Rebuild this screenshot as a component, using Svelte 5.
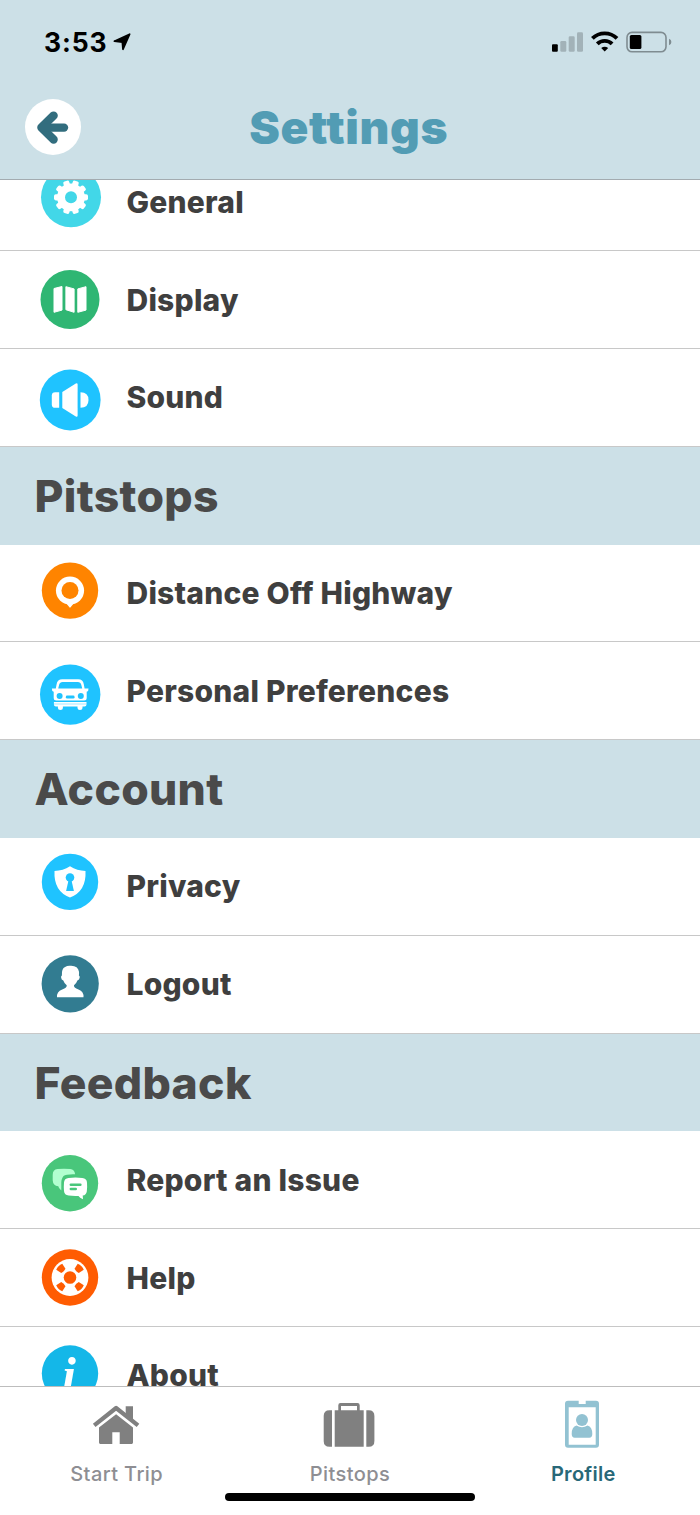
<script>
    let activeTab = 'Profile';

    // x, y: centre of the badge inside the 80x98 icon cell
    const sections = [
        {
            title: '',
            items: [
                { label: 'General', icon: 'gear', color: '#42d7e8', x: 41, y: 44.3, r: 30 },
                { label: 'Display', icon: 'map', color: '#2fb673', x: 40, y: 48.5, r: 29.5 },
                { label: 'Sound', icon: 'speaker', color: '#1fc3ff', x: 40.2, y: 51, r: 30.4 }
            ]
        },
        {
            title: 'Pitstops',
            items: [
                { label: 'Distance Off Highway', icon: 'pin', color: '#ff8400', x: 40, y: 46.6, r: 28.2 },
                { label: 'Personal Preferences', icon: 'car', color: '#1fc3ff', x: 40.2, y: 52.6, r: 30.2 }
            ]
        },
        {
            title: 'Account',
            items: [
                { label: 'Privacy', icon: 'shield', color: '#1fc3ff', x: 40, y: 44.9, r: 28.2 },
                { label: 'Logout', icon: 'person', color: '#327c91', x: 40.2, y: 48.8, r: 28.6 }
            ]
        },
        {
            title: 'Feedback',
            items: [
                { label: 'Report an Issue', icon: 'chat', color: '#49c67b', x: 40, y: 52.3, r: 28.2 },
                { label: 'Help', icon: 'ring', color: '#ff5c02', x: 40, y: 48.5, r: 28.2 },
                { label: 'About', icon: 'info', color: '#14b7e8', x: 40, y: 47.5, r: 28.2 }
            ]
        }
    ];

    const tabs = ['Start Trip', 'Pitstops', 'Profile'];
    const teeth = [0, 1, 2, 3, 4, 5, 6, 7, 8, 9];
</script>

<div class="screen">
    <header>
        <div class="status">
            <span class="time">3:53</span>
            <svg class="location" width="18" height="18" viewBox="0 0 18 18">
                <path d="M16.6 1.2 10 16.2 9.4 9.2 1.4 8.2Z" stroke="#000" stroke-width="1.8" stroke-linejoin="round" />
            </svg>
            <svg class="signals" width="120" height="22" viewBox="0 0 120 22">
                <rect x="0" y="13.3" width="5.8" height="7.5" rx="1" />
                <g opacity="0.2">
                    <rect x="8.3" y="10" width="6" height="10.8" rx="1.3" />
                    <rect x="16.7" y="5.3" width="6" height="15.5" rx="1.3" />
                    <rect x="25" y="1.3" width="6" height="19.5" rx="1.3" />
                </g>
                <g fill="none" stroke="#000" stroke-width="3.9">
                    <path d="M40.4 7.4A17.6 17.6 0 0 1 65 7.4" />
                    <path d="M45.3 12.9A10.5 10.5 0 0 1 60.1 12.9" />
                </g>
                <path d="M49.2 17Q52.7 14.4 56.2 17L52.7 20.6Z" />
                <rect x="75" y="1.4" width="39" height="19.4" rx="5" fill="none" stroke="#7f8c91" stroke-width="1.6" />
                <rect x="77.8" y="4" width="11.6" height="14" rx="1.6" />
                <path d="M117 7.7Q119.4 8.8 119.4 11T117 14.3Z" fill="#7f8c91" />
            </svg>
        </div>
        <div class="nav">
            <button class="back" aria-label="Back">
                <svg width="34" height="36" viewBox="0 0 34 36">
                    <path d="M17.6 6.6 5.4 18.6l12.2 12" />
                    <path d="M7 18.6h21" />
                </svg>
            </button>
            <h1>Settings</h1>
        </div>
    </header>

    <main>
        <div class="list">
            {#each sections as section}
                {#if section.title}
                    <h2>{section.title}</h2>
                {/if}
                {#each section.items as item}
                    <div class="row">
                        <svg class="badge" width="80" height="98" viewBox="0 0 80 98">
                            <g transform="translate({item.x} {item.y})" fill="#fff">
                                <circle r={item.r} fill={item.color} />
                                {#if item.icon === 'gear'}
                                    <circle r="13.9" />
                                    {#each teeth as tooth}
                                        <rect x="-3.1" y="-17" width="6.2" height="7" rx="1.8" transform="rotate({tooth * 36 + 18})" />
                                    {/each}
                                    <circle r="6" fill={item.color} />
                                {:else if item.icon === 'map'}
                                    <g stroke="#fff" stroke-width="1" stroke-linejoin="round">
                                        <path d="M-16-11l8-2v23.6l-8 2.2Z" />
                                        <path d="M-4.1-12.8l8.2 2.2v23.4l-8.2-2.6Z" />
                                        <path d="M7.8-10.6l8.2-2.2v23.4l-8.2 2.2Z" />
                                    </g>
                                {:else if item.icon === 'speaker'}
                                    <path d="M-11-7.8V7.8h-4q-3.4 0-3.4-3.4v-8.8q0-3.4 3.4-3.4Z" />
                                    <path d="M-7.9-8 5.6-16.6q1.8-.8 1.8 1V15.6q0 1.8-1.8 1L-7.9 8Z" />
                                    <path d="M10.3-7.8q8 0 8 7.8t-8 7.8Z" />
                                {:else if item.icon === 'pin'}
                                    <path d="M-6.5 11.5Q-2.2 13.4-.6 16.6q.6.9 1.2 0Q2.2 13.4 6.5 11.5Z" />
                                    <circle r="14.1" />
                                    <circle r="8.5" fill={item.color} />
                                {:else if item.icon === 'car'}
                                    <path d="M-14.4-6-13.6-10.4q.8-5 5.6-5H8q4.8 0 5.6 5L14.4-6h3.9q.3 2.4-1.8 3.2V3.6Q16.5 6 14 6h-28q-2.5 0-2.5-2.4v-6.4q-2.1-.8-1.8-3.2Z" />
                                    <path d="M-12-6-11-10q.6-2.7 3.4-2.7H7.6Q10.4-12.7 11-10L12-6Z" fill={item.color} />
                                    <circle cx="-10.6" cy="1.4" r="3" fill={item.color} />
                                    <circle cx="10.6" cy="1.4" r="3" fill={item.color} />
                                    <rect x="-4.4" y="1" width="8.8" height="3" rx="1.4" fill={item.color} />
                                    <path d="M-16.3 7.4h32.6V10q0 2-2 2h-2v1.3q0 2-2.5 2t-2.5-2V12H-7.3v1.3q0 2-2.5 2t-2.5-2V12h-2q-2 0-2-2Z" />
                                    <path d="M-16.3 9.4h32.6" stroke={item.color} stroke-width=".4" />
                                {:else if item.icon === 'shield'}
                                    <path d="M0-15.7Q7-11.4 15.5-10.8 16.5 9.5 0 15.7-16.5 9.5-15.5-10.8-7-11.4 0-15.7Z" />
                                    <circle cy="-4.4" r="4.3" fill={item.color} />
                                    <path d="M-1.4-2h2.8L3.9 9h-7.8Z" fill={item.color} />
                                {:else if item.icon === 'person'}
                                    <path d="M-13.2 13.4q-.5-5.4 5.2-7.7 5.2-2 4.5-4.2-2.4-1.8-3.4-4.8-2-.4-2.2-2.9-.2-1.8.8-2.1-.5-7 3.2-8.5Q-2.6-18.6 1-18 7.8-18 8.8-12q.2 1.7-.1 3.7 1 .3.8 2.1Q9.2-3.7 7.2-3.3q-1 3-3.4 4.8-.7 2.2 4.5 4.2 5.5 2.3 5 7.7Z" />
                                {:else if item.icon === 'chat'}
                                    <path d="M-12.5-14.2Q-6-15 .3-14.2q4.2.4 4.8 5.2-9-.3-11.6 1.8-2.5 3-2.2 8.7V7.2Q-11.4 5-11.7 3-17 2.6-17.3-3v-5.3q0-5.4 4.8-5.9Z" fill="#b2ffd0" />
                                    <path d="M-1.4-5.4q6.8-.9 13.7 0 4.6.4 4.7 4.8.4 4.7-.2 8.7-.6 3.6-4.1 4.1l.3 3.8q-3.4-1.4-4.5-3.4-5.5.2-9.8-.3-4.4-.5-4.7-4.5-.4-4.2 0-8.6.3-4.3 4.6-4.6Z" />
                                    <g fill="none" stroke={item.color} stroke-width="2.4" stroke-linecap="round">
                                        <path d="M.8 1.5h9.6" />
                                        <path d="M.8 5.7h5" />
                                    </g>
                                {:else if item.icon === 'ring'}
                                    <circle r="18.4" />
                                    <g fill={item.color}>
                                        <circle r="6.3" />
                                        {#each [45, 135, 225, 315] as angle}
                                            <path d="M-4.3-15.2Q0-17 4.3-15.2L3-9.4Q0-8.4-3-9.4Z" transform="rotate({angle})" />
                                        {/each}
                                    </g>
                                {:else}
                                    <text class="info" x="-8" y="18">i</text>
                                {/if}
                            </g>
                        </svg>
                        <span class="label">{item.label}</span>
                    </div>
                {/each}
            {/each}
        </div>
    </main>

    <footer>
        <nav class="tabs">
            {#each tabs as tab}
                <button class="tab" class:active={tab === activeTab} on:click={() => (activeTab = tab)}>
                    <svg width="60" height="54" viewBox="0 0 60 54">
                        {#if tab === 'Start Trip'}
                            <path d="M38.7 8.3H46V22l-7.3-5.6Z" />
                            <path d="M7.2 27.3 29.1 10 51 27.3" fill="none" stroke="currentColor" stroke-width="4.2" stroke-linejoin="round" />
                            <path d="M29.1 16.2 46 29.6V44.6q0 1.3-1.3 1.3h-12V34.3h-7.4v11.6h-12q-1.3 0-1.3-1.3v-15Z" />
                        {:else if tab === 'Pitstops'}
                            <path d="M12 12.3v36.4H9.5q-5.8 0-5.8-5.8V18.1q0-5.8 5.8-5.8Z" />
                            <path d="M46.3 12.3v36.4h2.5q5.6 0 5.6-5.8V18.1q0-5.8-5.6-5.8Z" />
                            <path d="M14.7 12.3h3.6V7.3q0-2.2 2.2-2.2h17q2.2 0 2.2 2.2v5h4v36.4h-29ZM21 8.1v4.2h16V8.1Z" fill-rule="evenodd" />
                        {:else}
                            <path fill-rule="evenodd" d="M15 2.7h10.7V6h7V2.7H43q3 0 3 3v41q0 3-3 3H15q-3 0-3-3v-41q0-3 3-3ZM15.7 9.3v37.4h27V9.3Z" />
                            <circle cx="29" cy="22" r="6" />
                            <path d="M23.5 27.4q5.5 3.6 11 0 4.8 1 4.8 8.6 0 3.7-3 3.7H21.7q-3 0-3-3.7 0-7.6 4.8-8.6Z" />
                        {/if}
                    </svg>
                    <span>{tab}</span>
                </button>
            {/each}
        </nav>
        <div class="home-indicator"></div>
    </footer>
</div>

<style>
    :global(body) {
        margin: 0;
        background: #fff;
    }

    .screen {
        display: flex;
        flex-direction: column;
        width: 700px;
        height: 1515px;
        overflow: hidden;
        font-family: Inter, 'Liberation Sans', sans-serif;
        background: #fff;
    }

    header {
        box-sizing: border-box;
        flex: none;
        height: 180px;
        background: #cce0e7;
        border-bottom: 1px solid #a3abb0;
    }

    button {
        padding: 0;
        border: 0;
        background: none;
        font-family: inherit;
        cursor: pointer;
    }

    .status {
        display: flex;
        align-items: center;
        height: 84px;
        padding: 0 28px 0 44px;
    }

    .time {
        width: 69px;
        font-size: 26.5px;
        font-weight: 700;
        letter-spacing: 0.9px;
        white-space: nowrap;
    }

    .signals {
        margin-left: auto;
    }

    .nav {
        display: grid;
        grid-template-columns: 56px 1fr 56px;
        align-items: center;
        height: 86px;
        padding: 0 27px 0 24.5px;
    }

    .back {
        display: flex;
        align-items: center;
        justify-content: center;
        width: 56px;
        height: 56px;
        border-radius: 50%;
        background: #fff;
    }

    .back path {
        fill: none;
        stroke: #326d7e;
        stroke-width: 8.4;
        stroke-linecap: round;
        stroke-linejoin: round;
    }

    h1 {
        margin: 0;
        font-size: 46px;
        font-weight: 900;
        letter-spacing: 0.7px;
        text-align: center;
        color: #529cb4;
    }

    main {
        flex: none;
        height: 1206px;
        overflow: hidden;
    }

    .list {
        margin-top: -26.5px;
    }

    h2 {
        height: 97.8px;
        margin: 0;
        padding: 0 0 0 34.5px;
        box-sizing: border-box;
        font-size: 44.5px;
        font-weight: 800;
        letter-spacing: 0.3px;
        line-height: 99px;
        color: #4a4a4a;
        background: #cce0e7;
    }

    .row {
        box-sizing: border-box;
        display: flex;
        align-items: center;
        height: 97.8px;
        padding-left: 30px;
        border-bottom: 1px solid #c8c8c8;
    }

    .badge {
        flex: none;
        margin-right: 16.5px;
    }

    .info {
        font-family: 'Liberation Serif', serif;
        font-size: 50px;
        font-style: italic;
        font-weight: 700;
    }

    .label {
        font-size: 30px;
        font-weight: 800;
        letter-spacing: 0.22px;
        color: #3f3f3f;
    }

    footer {
        box-sizing: border-box;
        flex: none;
        height: 129px;
        border-top: 1px solid #bdbdbd;
    }

    .tabs {
        display: grid;
        grid-template-columns: repeat(3, 1fr);
        height: 106px;
    }

    .tab {
        display: flex;
        flex-direction: column;
        align-items: center;
        padding-top: 11px;
        color: #808080;
    }

    .tab svg {
        fill: currentColor;
    }

    .tab span {
        margin-top: 9px;
        font-size: 20px;
        font-weight: 550;
        letter-spacing: 0.4px;
        line-height: 26px;
        color: #8e8e93;
    }

    .tab.active {
        color: #92c2d2;
    }

    .tab.active span {
        color: #286878;
        font-weight: 600;
        letter-spacing: 0.3px;
    }

    .home-indicator {
        width: 250px;
        height: 8px;
        margin: 0 auto;
        border-radius: 4px;
        background: #000;
    }
</style>
